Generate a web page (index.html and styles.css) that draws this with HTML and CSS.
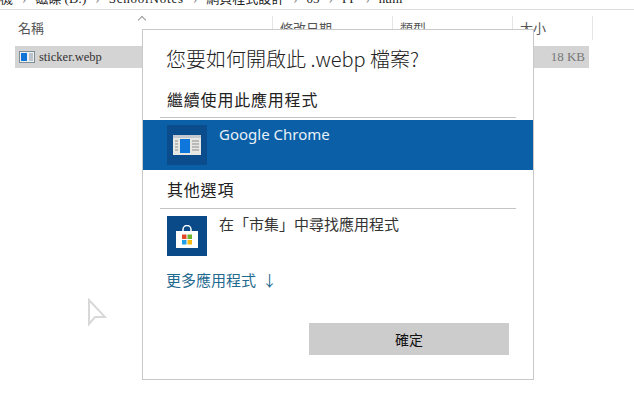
FILE: index.html
```html
<!DOCTYPE html>
<html lang="zh-Hant">
<head>
  <meta charset="UTF-8">
  <title>開啟 .webp 檔案</title>
  <link rel="stylesheet" href="styles.css">
</head>
<body>
  <div class="breadcrumb">
    <span>機</span><span class="sep">›</span>
    <span>磁碟 (D:)</span><span class="sep">›</span>
    <span class="wide">SchoolNotes</span><span class="sep">›</span>
    <span>網頁程式設計</span><span class="sep">›</span>
    <span>05</span><span class="sep">›</span>
    <span>PP</span><span class="sep">›</span>
    <span>html</span>
  </div>

  <div class="columns">
    <div class="col col-name">名稱<span class="caret"></span></div>
    <div class="col col-date">修改日期</div>
    <div class="col col-type">類型</div>
    <div class="col col-size">大小</div>
  </div>

  <div class="file-row">
    <svg class="file-icon" width="16" height="12" viewBox="0 0 16 12">
      <rect x="0.5" y="0.5" width="15" height="11" fill="#eef1f4" stroke="#7f8c96"/>
      <rect x="2" y="2" width="6" height="8" fill="#1273d6"/>
      <path d="M10 3h4M10 5h4M10 7h4M10 9h4" stroke="#8a96a0"/>
    </svg>
    <span class="file-name">sticker.webp</span>
    <span class="file-size">18 KB</span>
  </div>

  <svg class="pointer" width="20" height="29" viewBox="0 0 20 29">
    <path d="M2 2V26L8 19H18Z" fill="#fff" stroke="#d8d8d8" stroke-width="2"/>
  </svg>

  <div class="dialog">
    <div class="dialog-title">您要如何開啟此 .webp 檔案?</div>

    <div class="section-head">繼續使用此應用程式</div>
    <div class="app-row selected">
      <div class="app-tile tile-chrome">
        <svg width="28" height="20" viewBox="0 0 28 20">
          <rect width="28" height="20" fill="#e6e6e2"/>
          <rect width="28" height="3" fill="#c3c9ce"/>
          <rect x="7" y="4" width="10" height="14" fill="#0f76dc"/>
          <path d="M2 6h3M2 9h3M2 12h3M2 15h3M19 6h7M19 9h7M19 12h7M19 15h7" stroke="#8d8f8f"/>
        </svg>
      </div>
      <div class="app-name">Google Chrome</div>
    </div>

    <div class="section-head other">其他選項</div>
    <div class="app-row store">
      <div class="app-tile tile-store">
        <svg width="22" height="23" viewBox="0 0 22 23">
          <path d="M7 6V4.500a4 4 0 0 1 8 0V6" fill="none" stroke="#fff" stroke-width="1.500"/>
          <rect y="6" width="22" height="17" fill="#fff"/>
          <rect x="6" y="9.500" width="4.500" height="4.500" fill="#e2492b"/>
          <rect x="11.500" y="9.500" width="4.500" height="4.500" fill="#6fb52c"/>
          <rect x="6" y="15" width="4.500" height="4.500" fill="#1e9fe6"/>
          <rect x="11.500" y="15" width="4.500" height="4.500" fill="#f6b90f"/>
        </svg>
      </div>
      <div class="store-text">在「市集」中尋找應用程式</div>
    </div>

    <div class="more-link">更多應用程式<span class="arrow">↓</span></div>

    <div class="actions">
      <button class="ok-btn">確定</button>
    </div>
  </div>
</body>
</html>
```

FILE: styles.css
```css
html, body {
  margin: 0;
  padding: 0;
}
body {
  width: 634px;
  height: 401px;
  overflow: hidden;
  background-color: #fff;
  color: #333;
  font-family: "Noto Sans CJK TC", "Liberation Sans", sans-serif;
  position: relative;
}

/* explorer behind the dialog */
.breadcrumb {
  height: 9px;
  border-bottom: 1px solid #dcdcdc;
  overflow: hidden;
  display: flex;
  align-items: flex-end;
  gap: 9px;
  font-family: "Liberation Serif", "Noto Sans CJK TC", serif;
  font-size: 13px;
  line-height: 13px;
  color: #222;
  white-space: nowrap;
}
.breadcrumb span {
  position: relative;
  top: -4px;
}
.breadcrumb .sep {
  color: #888;
}
.breadcrumb .wide {
  letter-spacing: 0.8px;
}
.columns {
  display: flex;
  height: 24px;
  margin-top: 6px;
  margin-left: 15px;
  font-size: 13px;
  line-height: 24px;
  color: #555;
}
.col {
  border-right: 1px solid #e5e5e5;
  padding-left: 3px;
  box-sizing: border-box;
  position: relative;
}
.col-name { width: 258px; }
.col-date { width: 120px; padding-left: 7px; }
.col-type { width: 120px; padding-left: 7px; }
.col-size { width: 80px; padding-left: 7px; }
.caret {
  position: absolute;
  left: 124px;
  top: 1px;
  width: 5px;
  height: 5px;
  border-top: 1px solid #999;
  border-left: 1px solid #999;
  transform: rotate(45deg);
}
.file-row {
  display: flex;
  align-items: center;
  width: 574px;
  height: 22px;
  margin-top: 6px;
  margin-left: 15px;
  background-color: #d4d4d4;
  font-family: "Liberation Serif", serif;
  font-size: 12.5px;
  color: #333;
}
.file-icon {
  margin-left: 4px;
  margin-right: 4px;
}
.file-size {
  margin-left: auto;
  margin-right: 4px;
  font-size: 13px;
  color: #777;
}
.pointer {
  position: absolute;
  left: 87px;
  top: 298px;
}

/* dialog */
.dialog {
  position: absolute;
  left: 142px;
  top: 29px;
  width: 392px;
  height: 351px;
  box-sizing: border-box;
  border: 1px solid #c9c9c9;
  background: #fff;
}
.dialog-title {
  margin: 15px 0 0 23px;
  font-size: 20px;
  line-height: 28px;
  font-weight: 300;
  color: #222;
}
.section-head {
  margin: 15px 17px 0 17px;
  padding: 0 0 6px 7px;
  border-bottom: 1px solid #c4c4c4;
  font-size: 16px;
  line-height: 23px;
  letter-spacing: 0.8px;
  color: #222;
}
.section-head.other {
  margin-top: 8px;
  padding-bottom: 7px;
}
.app-row {
  display: flex;
  padding-left: 24px;
}
.app-row.selected {
  height: 50px;
  margin-top: 2px;
  align-items: center;
  background-color: #0a5fa6;
}
.app-row.store {
  margin-top: 7px;
}
.app-tile {
  width: 40px;
  height: 40px;
  display: flex;
  align-items: center;
  justify-content: center;
  flex-shrink: 0;
}
.tile-chrome { background-color: #0b4c8c; }
.tile-store { background-color: #0b4a88; }
.app-name {
  align-self: flex-start;
  margin: 4px 0 0 12px;
  font-family: "Noto Sans", sans-serif;
  font-size: 15px;
  line-height: 21px;
  color: #e8f0f8;
}
.store-text {
  margin: -1px 0 0 12px;
  font-size: 15px;
  line-height: 18px;
  color: #333;
}
.more-link {
  margin: 13px 0 0 23px;
  font-size: 15px;
  line-height: 21px;
  color: #1f6a8f;
}
.arrow {
  margin-left: 6px;
}
.actions {
  display: flex;
  justify-content: flex-end;
  margin-top: 33px;
  padding-right: 24px;
}
.ok-btn {
  width: 200px;
  height: 32px;
  border: none;
  background-color: #ccc;
  font-family: inherit;
  font-size: 14px;
  color: #111;
  padding: 0;
}
```
